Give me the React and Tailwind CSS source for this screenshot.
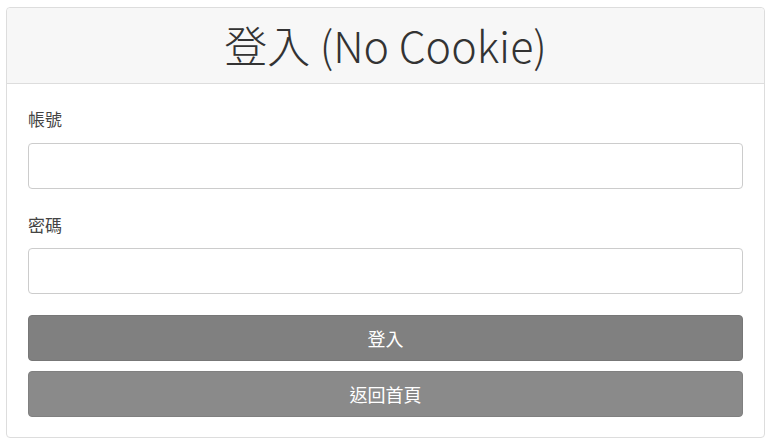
import React from 'react';

export default function App() {
  return (
    <div
      className="min-h-screen bg-white px-[6px] pt-[7px]"
      style={{ fontFamily: '"Noto Sans CJK TC", "Noto Sans", sans-serif' }}
    >
      <div className="rounded-[4px] border border-[#dddddd] bg-white">
        {/* Header */}
        <div className="flex h-[76px] items-center justify-center rounded-t-[4px] border-b border-[#dddddd] bg-[#f7f7f7]">
          <h1 className="pb-[3px] text-[43px] font-light leading-none text-[#333333]">登入 (No Cookie)</h1>
        </div>

        {/* Form */}
        <div className="px-[21px] pt-[22px] pb-[20px]">
          <label className="block text-[17px] leading-[26px] text-[#444444]">帳號</label>
          <input
            type="text"
            className="mt-[11px] block h-[46px] w-full rounded-[4px] border border-[#cccccc] bg-white px-3 outline-none"
          />
          <label className="mt-[23px] block text-[17px] leading-[26px] text-[#444444]">密碼</label>
          <input
            type="password"
            className="mt-[10px] block h-[46px] w-full rounded-[4px] border border-[#cccccc] bg-white px-3 outline-none"
          />
          <button className="mt-[21px] flex h-[46px] w-full items-center justify-center rounded-[4px] border border-[#777777] bg-[#808080] text-[18px] text-white">
            登入
          </button>
          <button className="mt-[10px] flex h-[46px] w-full items-center justify-center rounded-[4px] border border-[#808080] bg-[#8a8a8a] text-[18px] text-white">
            返回首頁
          </button>
        </div>
      </div>
    </div>
  );
}
